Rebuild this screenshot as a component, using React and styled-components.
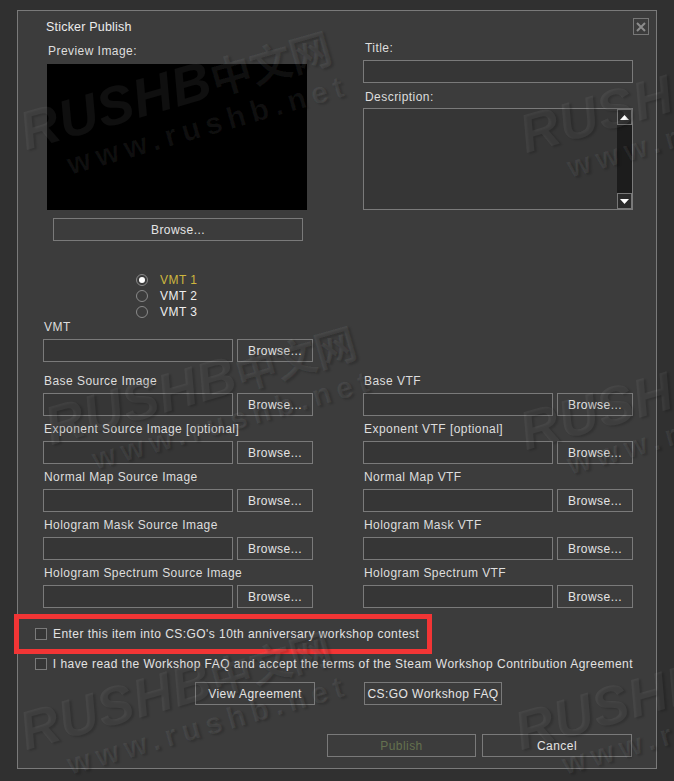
import React from 'react'
import styled, { createGlobalStyle } from 'styled-components'

const GlobalStyle = createGlobalStyle`
  html, body {
    margin: 0;
    padding: 0;
    background-color: #303030;
  }
  body {
    font-family: "Liberation Sans", Arial, sans-serif;
    font-size: 12px;
    letter-spacing: 0.45px;
    color: #e2e2e2;
  }
`

const Page = styled.div`
  position: relative;
  width: 674px;
  height: 781px;
  overflow: hidden;
  padding: 10px 0 0 17px;
  box-sizing: border-box;
`

const Dialog = styled.div`
  width: 640px;
  height: 759px;
  box-sizing: border-box;
  border: 1px solid #7a7a7a;
  background-color: #3c3c3c;
  padding: 7px 23px 0 25px;
  display: flex;
  flex-direction: column;
`

const Header = styled.div`
  display: flex;
  justify-content: space-between;
  align-items: center;
  height: 17px;
`

const DialogTitle = styled.div`
  padding-left: 3px;
  padding-top: 1px;
  font-size: 12.5px;
  letter-spacing: 0.2px;
  color: #ececec;
`

const CloseButton = styled.div`
  width: 16px;
  height: 17px;
  box-sizing: border-box;
  border: 1px solid #777;
  margin-right: -16px;
  display: flex;
  align-items: center;
  justify-content: center;
`

const TopSection = styled.div`
  display: grid;
  grid-template-columns: 264px 270px;
  column-gap: 56px;
  margin-top: 6px;
`

const PreviewColumn = styled.div`
  display: flex;
  flex-direction: column;
  padding: 3px 0 0 4px;
`

const InfoColumn = styled.div`
  display: flex;
  flex-direction: column;
`

const Label = styled.div`
  line-height: 14px;
  height: 14px;
  padding-left: ${p => p.indent || 1}px;
  margin-top: ${p => p.top || 0}px;
  margin-bottom: ${p => p.bottom || 5}px;
  color: #dedede;
  white-space: nowrap;
`

const PreviewBox = styled.div`
  width: 260px;
  height: 146px;
  background-color: #000;
`

const Button = styled.div`
  height: 23px;
  width: ${p => p.width}px;
  box-sizing: border-box;
  border: 1px solid #7a7a7a;
  display: flex;
  align-items: center;
  justify-content: center;
  color: ${p => (p.disabled ? '#65714f' : '#e4e4e4')};
  flex-shrink: 0;
  white-space: nowrap;
`

const WideBrowse = styled(Button)`
  margin: 8px 0 0 6px;
`

const TextInput = styled.div`
  height: 23px;
  width: ${p => p.width}px;
  box-sizing: border-box;
  border: 1px solid #7a7a7a;
  background-color: #363636;
`

const TextArea = styled.div`
  height: 102px;
  box-sizing: border-box;
  border: 1px solid #7a7a7a;
  background-color: #363636;
  display: flex;
  justify-content: flex-end;
`

const ScrollBar = styled.div`
  width: 15px;
  background-color: #1c1c1c;
  display: flex;
  flex-direction: column;
  justify-content: space-between;
`

const ScrollArrow = styled.div`
  width: 15px;
  height: 16px;
  box-sizing: border-box;
  border: 1px solid #777;
  background-color: #2a2a2a;
  display: flex;
  align-items: center;
  justify-content: center;
`

const RadioGroup = styled.div`
  display: flex;
  flex-direction: column;
  margin: 31px 0 0 93px;
`

const RadioRow = styled.div`
  display: flex;
  align-items: center;
  height: 16px;
  gap: 12px;
  color: ${p => (p.selected ? '#cdb63e' : '#eeeeee')};
`

const RadioCircle = styled.div`
  width: 12px;
  height: 12px;
  box-sizing: border-box;
  border-radius: 50%;
  border: 1px solid #8a8a8a;
  display: flex;
  align-items: center;
  justify-content: center;

  &::after {
    content: '';
    display: ${p => (p.selected ? 'block' : 'none')};
    width: 6px;
    height: 6px;
    border-radius: 50%;
    background-color: #fff;
  }
`

const FileField = styled.div`
  display: flex;
  flex-direction: column;
  margin-bottom: ${p => p.gap || 6}px;
`

const InputRow = styled.div`
  display: flex;
  gap: 4px;
`

const FileGrid = styled.div`
  display: grid;
  grid-template-columns: 270px 270px;
  column-gap: 50px;
`

const CheckRow = styled.div`
  position: relative;
  display: flex;
  align-items: center;
  height: 30px;
  gap: 6px;
  margin: ${p => p.top || 0}px 0 0 -8px;
  white-space: nowrap;
  color: #e2e2e2;
`

const CheckBox = styled.div`
  width: 12px;
  height: 12px;
  box-sizing: border-box;
  border: 1px solid #7a7a7a;
  background-color: #363636;
`

const Highlight = styled.div`
  position: absolute;
  left: -21px;
  top: -5px;
  width: 418px;
  height: 40px;
  box-sizing: border-box;
  border: 5px solid #f23535;
  pointer-events: none;
`

const LinkRow = styled.div`
  display: flex;
  gap: 49px;
  margin: 3px 0 0 152px;
`

const Footer = styled.div`
  display: flex;
  justify-content: flex-end;
  gap: 6px;
  margin: 29px 1px 0 0;
`

const Watermarks = styled.div`
  position: absolute;
  inset: 0;
  pointer-events: none;
`

const Mark = styled.div`
  position: absolute;
  transform: rotate(-16deg);
  transform-origin: 0 0;
  font-weight: bold;
  white-space: nowrap;
  color: rgba(255, 255, 255, 0.06);
  text-shadow: 2px 2px 2px rgba(0, 0, 0, 0.16);
`

const MarkLogo = styled.div`
  font-family: "Liberation Sans", sans-serif;
  font-style: italic;
  font-size: 54px;
  line-height: 56px;
  letter-spacing: 1px;
`

const MarkCjk = styled.span`
  font-family: "Noto Sans CJK SC", sans-serif;
  font-style: normal;
  font-size: 42px;
  letter-spacing: -1px;
`

const MarkUrl = styled.div`
  font-family: "Liberation Sans", sans-serif;
  font-size: 30px;
  line-height: 32px;
  letter-spacing: 6px;
  margin-left: 36px;
`

const fileRows = [
  ['Base Source Image', 'Base VTF'],
  ['Exponent Source Image [optional]', 'Exponent VTF [optional]'],
  ['Normal Map Source Image', 'Normal Map VTF'],
  ['Hologram Mask Source Image', 'Hologram Mask VTF'],
  ['Hologram Spectrum Source Image', 'Hologram Spectrum VTF'],
]

const markSpots = [
  [13, 105], [513, 108], [38, 400], [513, 405], [13, 705], [508, 705],
]

function FilePicker({ label, gap }) {
  return (
    <FileField gap={gap}>
      <Label>{label}</Label>
      <InputRow>
        <TextInput width={190} />
        <Button width={76}>Browse...</Button>
      </InputRow>
    </FileField>
  )
}

function Arrow({ up }) {
  return (
    <svg width="9" height="5" viewBox="0 0 9 5">
      <path d={up ? 'M0 5 L4.5 0 L9 5 Z' : 'M0 0 L4.5 5 L9 0 Z'} fill="#fff" />
    </svg>
  )
}

function App() {
  return (
    <>
      <GlobalStyle />
      <Page>
        <Dialog>
          <Header>
            <DialogTitle>Sticker Publish</DialogTitle>
            <CloseButton>
              <svg width="10" height="10" viewBox="0 0 10 10">
                <path d="M1 1 L9 9 M9 1 L1 9" stroke="#8c8c8c" strokeWidth="2" />
              </svg>
            </CloseButton>
          </Header>

          <TopSection>
            <PreviewColumn>
              <Label indent={1} bottom={6}>Preview Image:</Label>
              <PreviewBox />
              <WideBrowse width={250}>Browse...</WideBrowse>
            </PreviewColumn>
            <InfoColumn>
              <Label indent={2}>Title:</Label>
              <TextInput />
              <Label indent={2} top={7} bottom={4}>Description:</Label>
              <TextArea>
                <ScrollBar>
                  <ScrollArrow><Arrow up /></ScrollArrow>
                  <ScrollArrow><Arrow /></ScrollArrow>
                </ScrollBar>
              </TextArea>
            </InfoColumn>
          </TopSection>

          <RadioGroup>
            <RadioRow selected><RadioCircle selected />VMT 1</RadioRow>
            <RadioRow><RadioCircle />VMT 2</RadioRow>
            <RadioRow><RadioCircle />VMT 3</RadioRow>
          </RadioGroup>

          <FilePicker label="VMT" gap={12} />

          <FileGrid>
            {fileRows.map(([left, right]) => (
              <React.Fragment key={left}>
                <FilePicker label={left} />
                <FilePicker label={right} />
              </React.Fragment>
            ))}
          </FileGrid>

          <CheckRow top={5}>
            <CheckBox />
            Enter this item into CS:GO's 10th anniversary workshop contest
            <Highlight />
          </CheckRow>
          <CheckRow>
            <CheckBox />
            I have read the Workshop FAQ and accept the terms of the Steam Workshop Contribution Agreement
          </CheckRow>

          <LinkRow>
            <Button width={120}>View Agreement</Button>
            <Button width={138}>CS:GO Workshop FAQ</Button>
          </LinkRow>

          <Footer>
            <Button width={149} disabled>Publish</Button>
            <Button width={150}>Cancel</Button>
          </Footer>
        </Dialog>

        <Watermarks>
          {markSpots.map(([x, y]) => (
            <Mark key={`${x}-${y}`} style={{ left: x, top: y }}>
              <MarkLogo>RUSHB<MarkCjk>中文网</MarkCjk></MarkLogo>
              <MarkUrl>www.rushb.net</MarkUrl>
            </Mark>
          ))}
        </Watermarks>
      </Page>
    </>
  )
}

export default App
